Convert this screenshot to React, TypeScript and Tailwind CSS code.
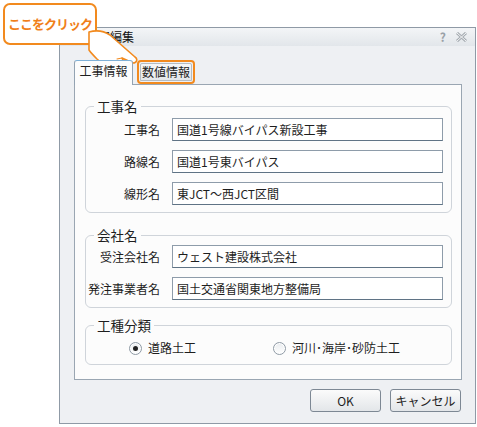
import React from "react"

const font = "font-['Meiryo_UI','Noto_Sans_CJK_JP',sans-serif]"

function Field({ label, value }: { label: string; value: string }) {
  return (
    <div className="grid grid-cols-[74px_1fr] items-center gap-x-[12px]">
      <span className="text-right text-[12px] leading-none text-[#1e1e1e]">{label}</span>
      <div className="flex h-[23px] items-center border border-[#8e9caa] border-b-[#5f7385] bg-white pl-[4px] text-[12px] text-[#1e1e1e]">
        {value}
      </div>
    </div>
  )
}

function Group({ title, children, className = "" }: { title: string; children: React.ReactNode; className?: string }) {
  return (
    <fieldset className={`rounded-[6px] border border-[#cfd4da] pr-[8px] pb-[7px] ${className}`}>
      <legend className="ml-[8px] px-[3px] text-[13.5px] leading-[16px] text-[#1e1e1e]">{title}</legend>
      {children}
    </fieldset>
  )
}

function Radio({ checked, label }: { checked?: boolean; label: string }) {
  return (
    <label className="flex items-center gap-[6px] text-[12px] text-[#1e1e1e]">
      <span className="flex h-[13px] w-[13px] items-center justify-center rounded-full border border-[#8f9aa5] bg-gradient-to-b from-[#e9ecef] to-white shadow-[inset_0_0_0_1px_#ffffff]">
        {checked && <span className="h-[5px] w-[5px] rounded-full bg-[#222]" />}
      </span>
      {label}
    </label>
  )
}

export default function App() {
  return (
    <div className={`relative h-[427px] w-[477px] overflow-hidden bg-white ${font}`}>
      <div className="ml-[59px] mt-[27px] flex h-[397px] w-[417px] flex-col border border-[#8f9aa6] bg-[#eef0f3]">
        {/* タイトルバー */}
        <div className="flex h-[18px] shrink-0 items-center justify-between bg-gradient-to-b from-[#f3f5f7] to-[#e2e6ea] pl-[2px] pr-[8px]">
          <span className="text-[12px] leading-none text-[#111]">工事情報編集</span>
          <div className="flex items-center gap-[10px]">
            <span className="text-[12px] font-bold leading-none text-[#9aa0a6]">?</span>
            <svg width="11" height="10" viewBox="0 0 11 10">
              <path d="M1 1 L10 9 M10 1 L1 9" stroke="#a7adb3" strokeWidth="3" />
              <path d="M1 1 L10 9 M10 1 L1 9" stroke="#f4f5f6" strokeWidth="1" />
            </svg>
          </div>
        </div>

        <div className="flex flex-1 flex-col pl-[14px] pr-[13px] pt-[14px]">
          {/* タブ */}
          <div className="flex items-end gap-[4px]">
            <div className="relative z-10 -mb-px flex h-[25px] w-[59px] items-center justify-center rounded-t-[3px] border border-b-0 border-[#93a3b2] border-t-[#7fb0d6] bg-[#fcfcfc] pb-[4px] text-[12px] text-[#1e1e1e]">
              工事情報
            </div>
            <div className="rounded-[4px] border-2 border-[#f28a1e] p-px">
              <div className="flex h-[18px] w-[52px] items-center justify-center rounded-t-[2px] border border-[#b4bcc4] bg-gradient-to-b from-[#f5f6f7] to-[#e4e7ea] text-[12px] text-[#1e1e1e]">
                数値情報
              </div>
            </div>
          </div>

          {/* パネル */}
          <div className="flex h-[296px] flex-col border border-[#9aa6b2] bg-[#fcfcfc] pl-[10px] pr-[9px] pt-[13px]">
            <Group title="工事名">
              <div className="mt-[4px] flex flex-col gap-[9px]">
                <Field label="工事名" value="国道1号線バイパス新設工事" />
                <Field label="路線名" value="国道1号東バイパス" />
                <Field label="線形名" value="東JCT～西JCT区間" />
              </div>
            </Group>
            <Group title="会社名" className="mt-[14px]">
              <div className="mt-[2px] flex flex-col gap-[9px]">
                <Field label="受注会社名" value="ウェスト建設株式会社" />
                <Field label="発注事業者名" value="国土交通省関東地方整備局" />
              </div>
            </Group>
            <Group title="工種分類" className="mt-[9px]">
              <div className="mt-[6px] grid grid-cols-[144px_1fr] pl-[43px]">
                <Radio checked label="道路土工" />
                <Radio label="河川･海岸･砂防土工" />
              </div>
            </Group>
          </div>

          {/* ボタン */}
          <div className="mt-[9px] flex justify-end gap-[9px] pr-px">
            <button className="h-[23px] w-[71px] rounded-[3px] border border-[#7d8894] bg-gradient-to-b from-[#fbfbfb] to-[#e3e6e9] text-[12px] text-[#1e1e1e]">
              OK
            </button>
            <button className="h-[23px] w-[71px] rounded-[3px] border border-[#7d8894] bg-gradient-to-b from-[#fbfbfb] to-[#e3e6e9] text-[12px] text-[#1e1e1e]">
              キャンセル
            </button>
          </div>
        </div>
      </div>

      {/* 吹き出し */}
      <div className="absolute left-[3px] top-[3px] flex h-[42px] w-[94px] items-center justify-center rounded-[7px] border-[2.5px] border-[#f28a1e] bg-white">
        <span className="text-[13px] font-bold tracking-[-1px] text-[#f07f1a]">ここをクリック</span>
      </div>

      {/* 指アイコン */}
      <svg className="absolute left-[86px] top-[28px]" width="56" height="42" viewBox="0 0 56 42">
        <path
          d="M3 4 C10 2 18 3 24 7 L49 29 C52 31 51 35 47 35 L36 30 C38 33 36 37 32 36 C32 39 28 40 25 38 C24 40 20 40 18 37 L11 31 C8 28 5 25 3 22 Z"
          fill="#ffffff"
          stroke="#f28a1e"
          strokeWidth="1.6"
          strokeLinejoin="round"
        />
        <path d="M36 30 L31 31 M32 36 L28 34 M25 38 L22 35" stroke="#f28a1e" strokeWidth="1.2" fill="none" strokeLinecap="round" />
      </svg>
    </div>
  )
}
